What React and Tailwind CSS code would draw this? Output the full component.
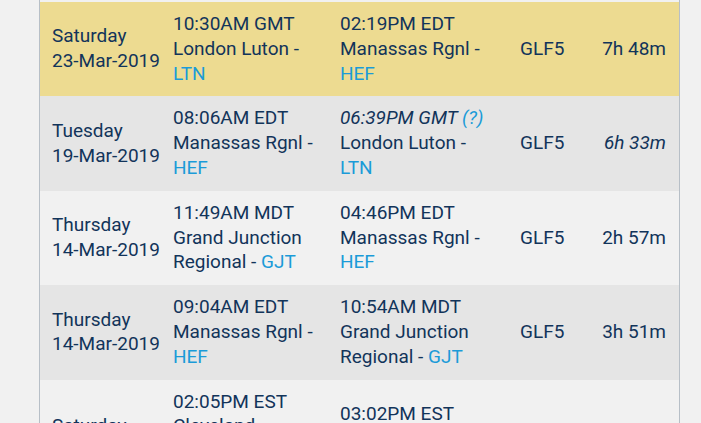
import React from "react";

const rows = [
  {
    bg: "bg-[#eddb91]",
    day: "Saturday",
    date: "23-Mar-2019",
    dep: { time: "10:30AM GMT", name: "London Luton -", code: "LTN" },
    arr: { time: "02:19PM EDT", name: "Manassas Rgnl -", code: "HEF" },
    ac: "GLF5",
    dur: "7h 48m",
  },
  {
    bg: "bg-[#e5e5e5]",
    day: "Tuesday",
    date: "19-Mar-2019",
    dep: { time: "08:06AM EDT", name: "Manassas Rgnl -", code: "HEF" },
    arr: { time: "06:39PM GMT", est: true, name: "London Luton -", code: "LTN" },
    ac: "GLF5",
    dur: "6h 33m",
    durItalic: true,
  },
  {
    bg: "bg-[#f1f1f1]",
    day: "Thursday",
    date: "14-Mar-2019",
    dep: { time: "11:49AM MDT", name: "Grand Junction Regional -", code: "GJT" },
    arr: { time: "04:46PM EDT", name: "Manassas Rgnl -", code: "HEF" },
    ac: "GLF5",
    dur: "2h 57m",
  },
  {
    bg: "bg-[#e5e5e5]",
    day: "Thursday",
    date: "14-Mar-2019",
    dep: { time: "09:04AM EDT", name: "Manassas Rgnl -", code: "HEF" },
    arr: { time: "10:54AM MDT", name: "Grand Junction Regional -", code: "GJT" },
    ac: "GLF5",
    dur: "3h 51m",
  },
  {
    bg: "bg-[#f1f1f1]",
    day: "Saturday",
    date: "09-Mar-2019",
    dep: { time: "02:05PM EST", name: "Cleveland-Hopkins International -", code: "CLE" },
    arr: { time: "03:02PM EST", name: "Manassas Rgnl -", code: "HEF" },
    ac: "GLF5",
    dur: "0h 57m",
  },
];

function Place({ p }) {
  return (
    <div>
      <div className={p.est ? "italic" : ""}>
        {p.time}
        {p.est && <span className="text-[#1b9bd8]"> (?)</span>}
      </div>
      <div>
        {p.name} <span className="text-[#1b9bd8]">{p.code}</span>
      </div>
    </div>
  );
}

export default function App() {
  return (
    <div
      className="w-[701px] h-[423px] overflow-hidden bg-[#f1f1f1] text-[#12345a]"
      style={{ fontFamily: "Roboto, 'Noto Sans', sans-serif" }}
    >
      <div className="ml-[39px] w-[641px] h-full border-x border-[#b7bfc7] pt-[2px]">
        {rows.map((r, i) => (
          <div
            key={i}
            className={`${r.bg} grid grid-cols-[121px_167px_180px_1fr_auto] items-center pl-[12px] pr-[13px] py-[10px] text-[19px] leading-[24.8px]`}
          >
            <div>
              <div>{r.day}</div>
              <div>{r.date}</div>
            </div>
            <div className="pr-[12px]">
              <Place p={r.dep} />
            </div>
            <div className="pr-[25px]">
              <Place p={r.arr} />
            </div>
            <div>{r.ac}</div>
            <div className={`text-right ${r.durItalic ? "italic" : ""}`}>{r.dur}</div>
          </div>
        ))}
      </div>
    </div>
  );
}
